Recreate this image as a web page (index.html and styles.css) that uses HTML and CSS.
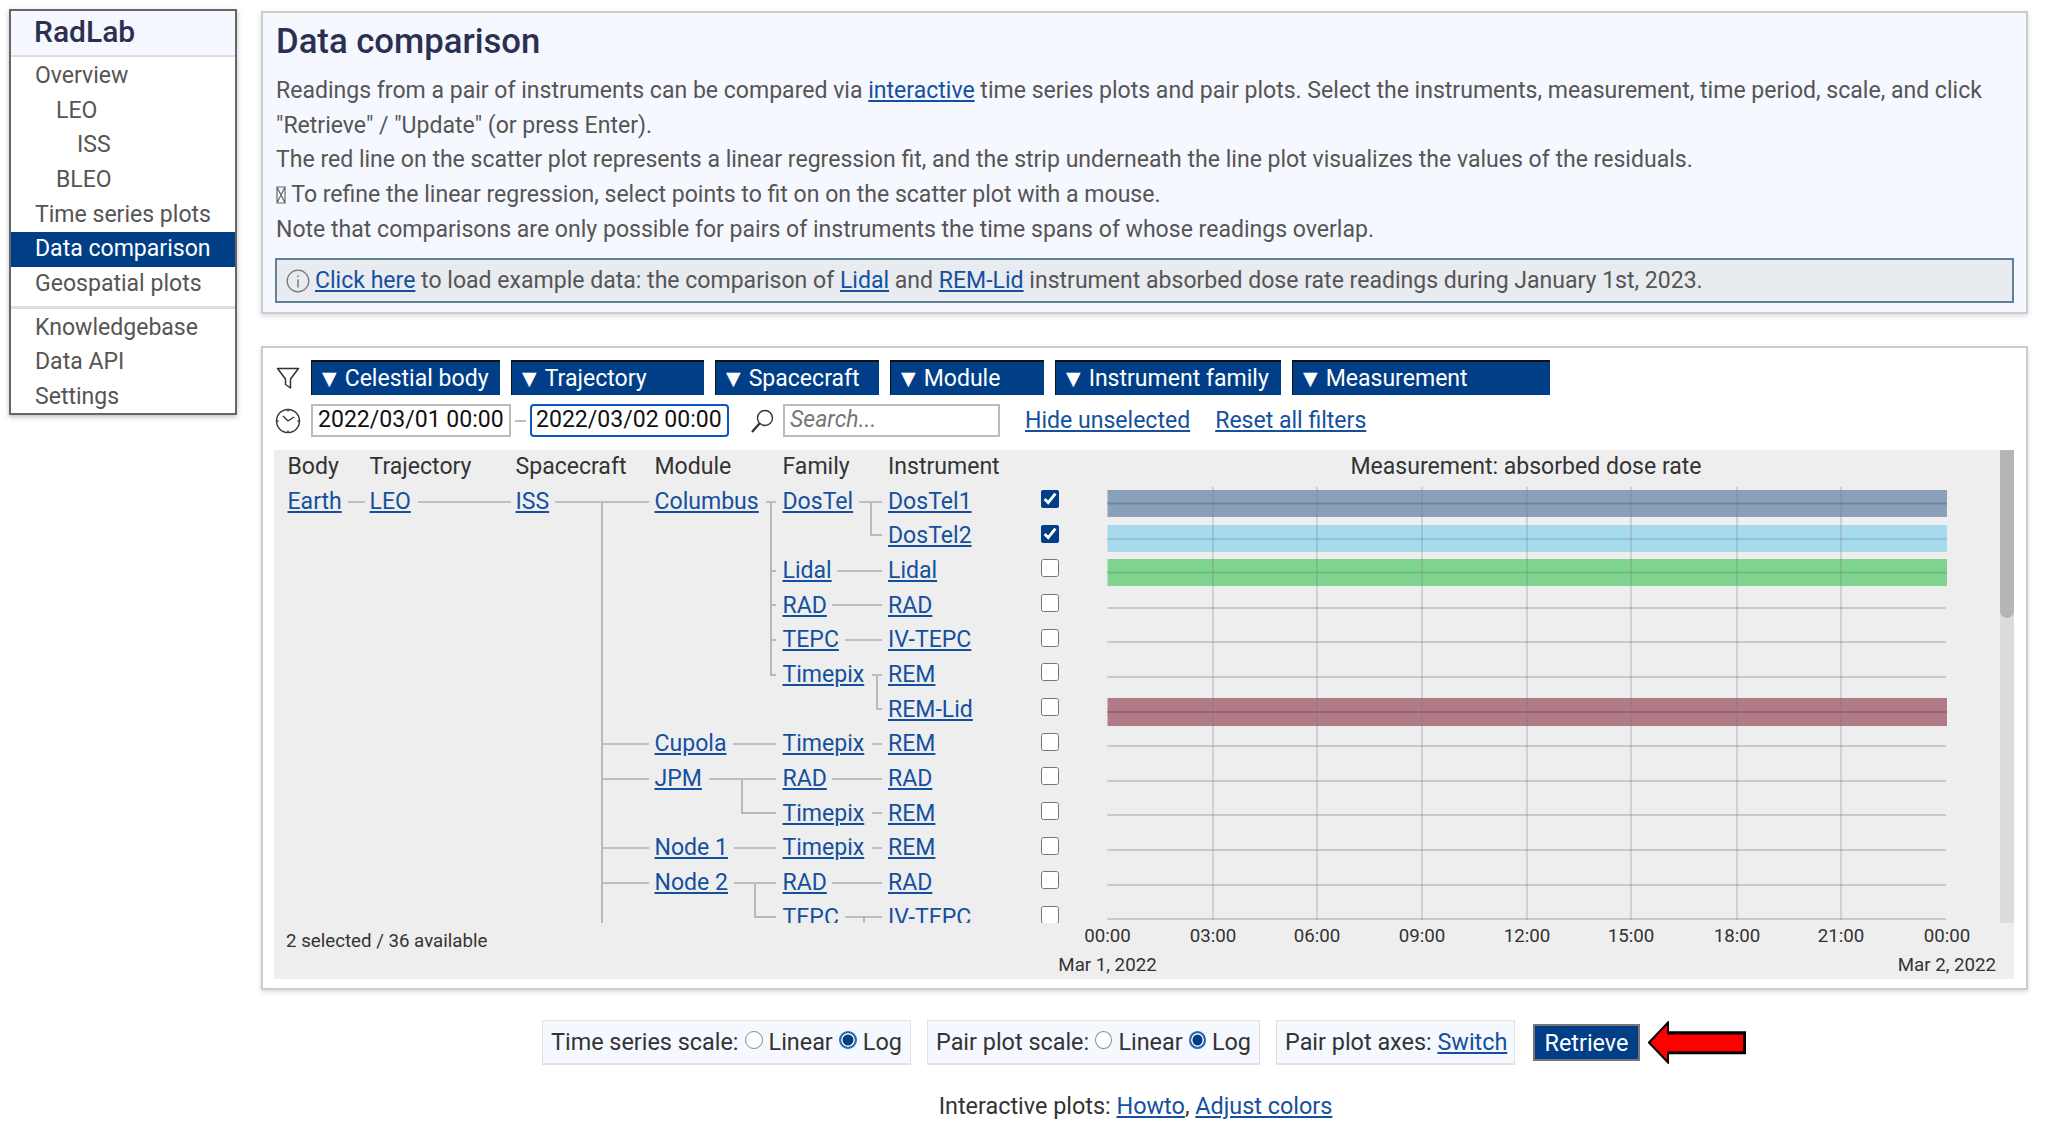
FILE: index.html
```html
<!DOCTYPE html>
<html lang="en">
<head>
<meta charset="utf-8">
<title>RadLab - Data comparison</title>
<link rel="stylesheet" href="styles.css">
</head>
<body>
<nav class="sidebar">
  <div class="brand">RadLab</div>
  <ul class="menu">
    <li>Overview</li>
    <li class="lvl1">LEO</li>
    <li class="lvl2">ISS</li>
    <li class="lvl1">BLEO</li>
    <li>Time series plots</li>
    <li class="active">Data comparison</li>
    <li>Geospatial plots</li>
  </ul>
  <ul class="menu menu-last">
    <li>Knowledgebase</li>
    <li>Data API</li>
    <li>Settings</li>
  </ul>
</nav>
<main class="main">
  <section class="panel intro">
    <h1>Data comparison</h1>
    <p>Readings from a pair of instruments can be compared via <a href="#">interactive</a> time series plots and pair plots. Select the instruments, measurement, time period, scale, and click "Retrieve" / "Update" (or press Enter).</p>
    <p>The red line on the scatter plot represents a linear regression fit, and the strip underneath the line plot visualizes the values of the residuals.</p>
    <p><svg class="tofu" viewBox="0 0 10 20"><path d="M1 2h8v16H1zM1 2l8 16M9 2L1 18" fill="none" stroke="#666" stroke-width="1.2"/></svg> To refine the linear regression, select points to fit on on the scatter plot with a mouse.</p>
    <p>Note that comparisons are only possible for pairs of instruments the time spans of whose readings overlap.</p>
    <div class="notice">
      <svg class="info-icon" viewBox="0 0 24 24"><circle cx="12" cy="12" r="10.8" fill="none" stroke="#777" stroke-width="1.3"/><path d="M12 6.500v1.600M12 10.500v8" stroke="#777" stroke-width="1.5" fill="none"/></svg>
      <span><a href="#">Click here</a> to load example data: the comparison of <a href="#">Lidal</a> and <a href="#">REM-Lid</a> instrument absorbed dose rate readings during January 1st, 2023.</span>
    </div>
  </section>

  <section class="panel browser">
    <div class="toolbar">
      <svg class="tool-icon" viewBox="0 0 24 24"><path d="M1.500 2.500h21L14.500 13v9l-5-3.500V13z" fill="none" stroke="#333" stroke-width="1.5" stroke-linejoin="round"/></svg>
      <button class="filter f-body"><span class="tri">▼</span>Celestial body</button>
      <button class="filter f-traj"><span class="tri">▼</span>Trajectory</button>
      <button class="filter f-craft"><span class="tri">▼</span>Spacecraft</button>
      <button class="filter f-mod"><span class="tri">▼</span>Module</button>
      <button class="filter f-fam"><span class="tri">▼</span>Instrument family</button>
      <button class="filter f-meas"><span class="tri">▼</span>Measurement</button>
    </div>
    <div class="toolbar toolbar-time">
      <svg class="clock-icon" viewBox="0 0 26 26"><circle cx="13" cy="13" r="11.500" fill="none" stroke="#333" stroke-width="1.400"/><path d="M13 13L8 8M13 13l6-4M13 1.500v2M13 22.500v2M1.500 13h2M22.500 13h2" stroke="#333" stroke-width="1.400" fill="none"/></svg>
      <input class="date" type="text" value="2022/03/01 00:00">
      <span class="dash"></span>
      <input class="date date-focus" type="text" value="2022/03/02 00:00">
      <svg class="search-icon" viewBox="0 0 26 26"><circle cx="16" cy="10" r="7.500" fill="none" stroke="#333" stroke-width="1.400"/><path d="M10.500 15.500L3 24" stroke="#333" stroke-width="2.400" fill="none"/></svg>
      <input class="search" type="text" placeholder="Search...">
      <a class="tool-link" href="#">Hide unselected</a>
      <a class="tool-link" href="#">Reset all filters</a>
    </div>

    <div class="explorer">
      <div class="tree">
        <svg class="connectors" viewBox="0 0 807 473">
          <path class="thin" d="M327 52V473M496 52V226M496 121h5M496 155h5M496 190h5M496 225h5M596 52V85h11M602 225V259h5M467 329V363h34M480 433V467h21"/>
          <path d="M73 52h17M143 52h93M280 52h94M491 52h10M584 52h23M562 121h45M557 155h50M570 190h37M597 225h10M327 294h47M458 294h43M597 294h10M327 329h47M434 329h67M557 329h50M597 363h10M327 398h47M459 398h42M597 398h10M327 433h47M459 433h42M557 433h50M570 467h37"/>
          <path class="thin" d="M589 467v6"/>
        </svg>
        <div class="grid">
          <b>Body</b><b>Trajectory</b><b>Spacecraft</b><b>Module</b><b>Family</b><b>Instrument</b><i></i>

          <a href="#">Earth</a><a href="#">LEO</a><a href="#">ISS</a><a href="#">Columbus</a><a href="#">DosTel</a><a href="#">DosTel1</a><label><input type="checkbox" checked></label>
          <i></i><i></i><i></i><i></i><i></i><a href="#">DosTel2</a><label><input type="checkbox" checked></label>
          <i></i><i></i><i></i><i></i><a href="#">Lidal</a><a href="#">Lidal</a><label><input type="checkbox"></label>
          <i></i><i></i><i></i><i></i><a href="#">RAD</a><a href="#">RAD</a><label><input type="checkbox"></label>
          <i></i><i></i><i></i><i></i><a href="#">TEPC</a><a href="#">IV-TEPC</a><label><input type="checkbox"></label>
          <i></i><i></i><i></i><i></i><a href="#">Timepix</a><a href="#">REM</a><label><input type="checkbox"></label>
          <i></i><i></i><i></i><i></i><i></i><a href="#">REM-Lid</a><label><input type="checkbox"></label>
          <i></i><i></i><i></i><a href="#">Cupola</a><a href="#">Timepix</a><a href="#">REM</a><label><input type="checkbox"></label>
          <i></i><i></i><i></i><a href="#">JPM</a><a href="#">RAD</a><a href="#">RAD</a><label><input type="checkbox"></label>
          <i></i><i></i><i></i><i></i><a href="#">Timepix</a><a href="#">REM</a><label><input type="checkbox"></label>
          <i></i><i></i><i></i><a href="#">Node 1</a><a href="#">Timepix</a><a href="#">REM</a><label><input type="checkbox"></label>
          <i></i><i></i><i></i><a href="#">Node 2</a><a href="#">RAD</a><a href="#">RAD</a><label><input type="checkbox"></label>
          <i></i><i></i><i></i><i></i><a href="#">TEPC</a><a href="#">IV-TEPC</a><label><input type="checkbox"></label>
        </div>
      </div>
      <svg class="chart" viewBox="0 0 918 529">
        <text class="chart-title" x="444" y="24">Measurement: absorbed dose rate</text>
        <g class="rows">
          <path d="M25.500 158H864M25.500 192H864M25.500 227H864M25.500 296H864M25.500 331H864M25.500 365H864M25.500 400H864M25.500 435H864M25.500 469H864"/>
        </g>
        <rect x="25.500" y="40" width="839.500" height="27" fill="#8a9fb8"/>
        <rect x="25.500" y="75" width="839.500" height="27" fill="#a8daee"/>
        <rect x="25.500" y="109" width="839.500" height="27" fill="#80d490"/>
        <rect x="25.500" y="248" width="839.500" height="28" fill="#b07a86"/>
        <g class="band">
          <path d="M25.500 53.500H865" stroke="#6f86a3"/>
          <path d="M25.500 89H865" stroke="#8fc3d8"/>
          <path d="M25.500 122.500H865" stroke="#6bbd7c"/>
          <path d="M25.500 262H865" stroke="#99606e"/>
        </g>
        <path class="vgrid" d="M131 37V470M235 37V470M340 37V470M445 37V470M549 37V470M655 37V470M759 37V470"/>
        <g class="ticks">
          <text x="25.500" y="492">00:00</text><text x="131" y="492">03:00</text><text x="235" y="492">06:00</text><text x="340" y="492">09:00</text><text x="445" y="492">12:00</text><text x="549" y="492">15:00</text><text x="655" y="492">18:00</text><text x="759" y="492">21:00</text><text x="865" y="492">00:00</text>
          <text x="25.500" y="521">Mar 1, 2022</text><text x="914" y="521">Mar 2, 2022</text>
        </g>
      </svg>
      <div class="scrollbar"><div class="thumb"></div></div>
      <div class="count">2 selected / 36 available</div>
    </div>
  </section>

  <div class="actions">
    <div class="option opt-a">Time series scale:<input type="radio" name="ts">Linear<input type="radio" name="ts" checked>Log</div>
    <div class="option opt-b">Pair plot scale:<input type="radio" name="pp">Linear<input type="radio" name="pp" checked>Log</div>
    <div class="option opt-c">Pair plot axes:&nbsp;<a href="#">Switch</a></div>
    <button class="retrieve">Retrieve</button>
    <svg class="arrow" viewBox="0 0 98 43"><path d="M1 21.500L20 1.500V12.500H96V31.500H20V41.500Z" fill="#f00" stroke="#000" stroke-width="2"/><path d="M20 11.500H97V32H20" fill="none" stroke="#000" stroke-width="2.500"/></svg>
  </div>
  <p class="foot">Interactive plots: <a href="#">Howto</a>, <a href="#">Adjust colors</a></p>
</main>
</body>
</html>
```
FILE: styles.css
```css
* { box-sizing: border-box; }
html, body { margin: 0; height: 100%; }
body {
  display: flex;
  align-items: flex-start;
  gap: 24px;
  padding: 9px 20px 0 9px;
  height: 1129px;
  overflow: hidden;
  background: #fff;
  font: 400 23.05px/34.67px Roboto, "DejaVu Sans", sans-serif;
  color: #555;
}
a { color: #14509e; text-decoration: underline; }

.sidebar {
  flex: none;
  width: 228px;
  height: 406px;
  border: 2px solid #666;
  background: #fff;
  box-shadow: 0 2px 5px rgba(0,0,0,.25);
}
.brand {
  height: 46px;
  padding-left: 23px;
  background: #f5f8fe;
  border-bottom: 2px solid #ddd;
  color: #2b3052;
  font-size: 30px;
  font-weight: 500;
  line-height: 42px;
}
.menu { list-style: none; margin: 0; padding: 2px 0 4px; border-bottom: 3px solid #ddd; }
.menu-last { border: 0; padding-top: 2px; }
.menu li { height: 34.67px; padding-left: 24px; white-space: nowrap; }
.menu .lvl1 { padding-left: 45px; }
.menu .lvl2 { padding-left: 66px; }
.menu .active { background: #003f88; color: #fff; }

.main { flex: none; width: 1767px; margin-top: 2px; }
.panel {
  border: 2px solid #ccc;
  box-shadow: 0 2px 5px rgba(0,0,0,.15);
}
.intro { height: 303px; padding: 0 12px 0 13px; background: #f5f8fe; }
.intro h1 {
  margin: 0;
  height: 61px;
  color: #2b3052;
  font-size: 34.7px;
  font-weight: 500;
  line-height: 56px;
}
.intro p { margin: 0; }
.tofu { width: 10px; height: 20px; vertical-align: -3px; }
.notice {
  display: flex;
  align-items: center;
  gap: 5px;
  height: 45px;
  margin: 11px 0 0 -1px;
  padding-left: 9px;
  border: 2px solid #5f8296;
  background: #e8ebf0;
  white-space: nowrap;
}
.info-icon { width: 24px; height: 24px; flex: none; }

.browser {
  height: 644px;
  margin-top: 32px;
  padding: 12px 12px 0 11px;
  background: #fff;
}
.toolbar { display: flex; align-items: center; height: 35px; }
.tool-icon { flex: none; width: 24px; height: 24px; margin: 0 11px 0 2px; }
.clock-icon { flex: none; width: 26px; height: 26px; margin: 0 10px 0 1px; }
.filter {
  display: block;
  flex: none;
  height: 35px;
  margin-right: 11px;
  padding: 0 0 0 10px;
  border: 0;
  border-top: 2px solid #111;
  border-left: 1px solid #111;
  background: #003f88;
  color: #fff;
  font: inherit;
  font-weight: 400;
  line-height: 32px;
  text-align: left;
}
.tri { margin-right: 8px; font-size: 19px; vertical-align: 1px; }
.f-body { width: 189px; }
.f-traj { width: 193px; }
.f-craft { width: 164px; }
.f-mod { width: 154px; }
.f-fam { width: 226px; }
.f-meas { width: 258px; }

.toolbar-time { margin-top: 9px; height: 33px; }
.date, .search {
  flex: none;
  height: 33px;
  padding: 0 5px;
  border: 2px solid #bbb;
  background: #fff;
  color: #111;
  font: inherit;
  outline: 0;
}
.date { width: 200px; }
.date-focus { width: 199px; padding: 0 4px; border: 2.5px solid #0b57c2; border-radius: 4px; }
.dash { width: 11px; height: 2px; margin: 0 4px; background: #bbb; }
.search { width: 217px; margin-right: 25px; }
.search::placeholder { color: #777; font-style: italic; }
.search-icon { flex: none; width: 26px; height: 26px; margin: 0 8px 0 20px; }
.tool-link { margin-right: 25px; padding-top: 1px; white-space: nowrap; }

.explorer {
  display: grid;
  grid-template-columns: 808px 918px 14px;
  grid-template-rows: 473px 56px;
  margin-top: 13px;
  background: #eee;
}
.tree { position: relative; overflow: hidden; }
.connectors { position: absolute; left: 1px; top: 0; width: 807px; height: 473px; }
.connectors path { fill: none; stroke: #bfbfbf; stroke-width: 2; }
.connectors .thin { stroke: #a8a8a8; stroke-width: 1.5; }
.grid {
  position: relative;
  display: grid;
  grid-template-columns: 82px 146px 139px 128px 105.5px 152.5px 41px;
  grid-auto-rows: 34.67px;
  padding-left: 13.5px;
  white-space: nowrap;
}
.grid b { font-weight: 400; color: #333; }
.grid label { display: flex; align-items: center; height: 34.67px; }
.grid input {
  width: 18px;
  height: 18px;
  margin: -6px 0 0;
  accent-color: #003f88;
}

.chart { grid-column: 2; grid-row: 1 / 3; width: 918px; height: 529px; overflow: visible; }
.chart-title { fill: #333; font-size: 23.05px; text-anchor: middle; }
.rows path { stroke: #c9c9c9; stroke-width: 2; fill: none; }
.band path { stroke-width: 2; fill: none; }
.vgrid { stroke: rgba(120,120,120,.38); stroke-width: 1.3; fill: none; }
.ticks text { fill: #333; font-size: 18.7px; text-anchor: middle; }
.ticks text:last-child { text-anchor: end; }
.scrollbar { grid-column: 3; grid-row: 1; background: #dcdcdc; }
.thumb { height: 168px; background: #b5b5b5; border-radius: 0 0 7px 7px; }
.count {
  grid-column: 1;
  grid-row: 2;
  padding: 1px 0 0 12px;
  color: #333;
  font-size: 18.7px;
}

.actions {
  display: flex;
  align-items: center;
  height: 45px;
  margin-top: 30px;
  padding-left: 281px;
  color: #333;
  font-size: 23.4px;
}
.option {
  display: flex;
  align-items: center;
  flex: none;
  height: 45px;
  margin-right: 16px;
  padding: 1px 8px 0;
  border: 1px solid #e2e2e2;
  border-bottom-width: 2px;
  background: #f5f8fe;
  white-space: nowrap;
}
.option input {
  appearance: none;
  width: 18px;
  height: 18px;
  margin: -5px 6px 0;
  border: 1.5px solid #888;
  border-radius: 50%;
  background: #fff;
}
.option input:checked {
  border: 2px solid #2f66ad;
  background: #003f88;
  box-shadow: inset 0 0 0 1.5px #fff;
}
.opt-a { width: 369px; }
.opt-b { width: 333px; }
.opt-c { width: 239px; margin-right: 18px; }
.retrieve {
  flex: none;
  width: 107px;
  height: 37px;
  padding: 0;
  border: 2px solid #777;
  background: #003f88;
  color: #fff;
  font: inherit;
}
.arrow { flex: none; width: 98px; height: 43px; margin-left: 8px; }
.foot { margin: 24px 0 0; padding-right: 18px; color: #333; font-size: 23.4px; text-align: center; }
```
